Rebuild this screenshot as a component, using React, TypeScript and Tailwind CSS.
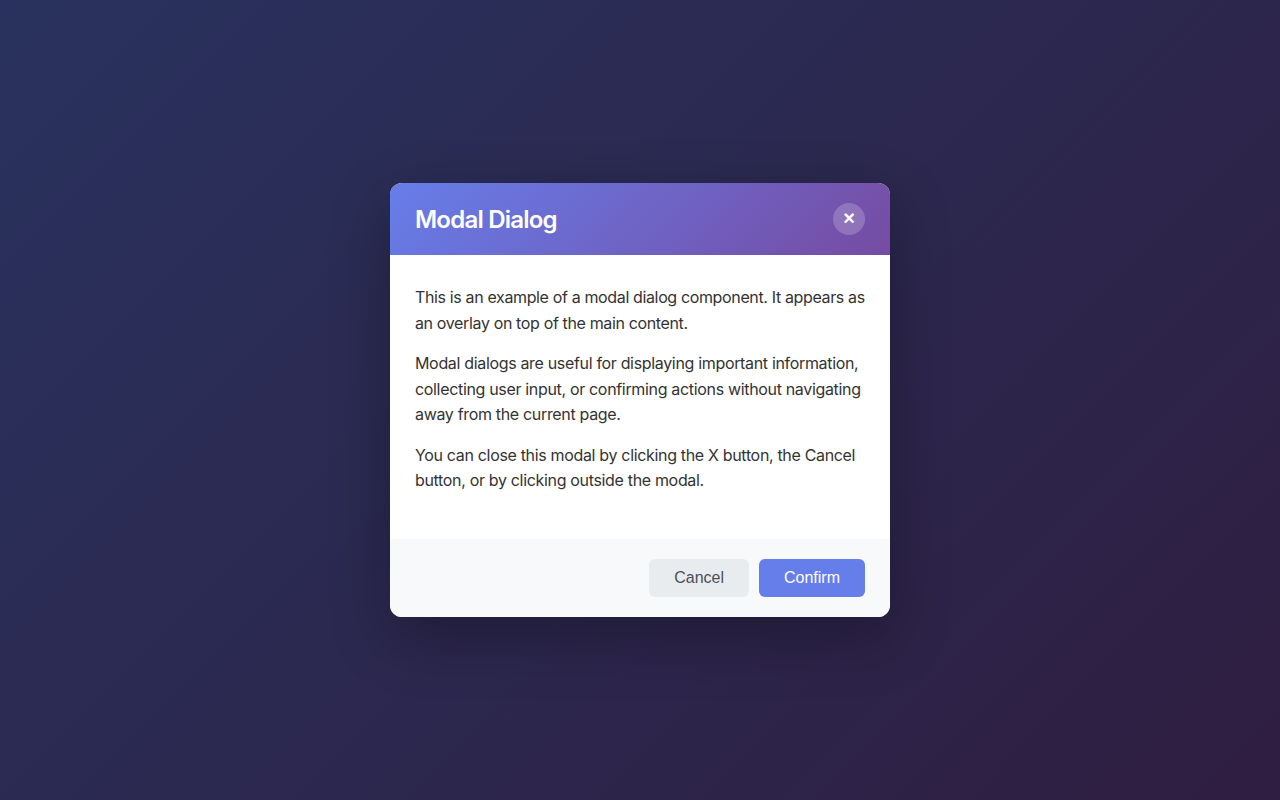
export default function App() {
  return (
    <div className="relative h-screen overflow-hidden bg-[linear-gradient(135deg,#667eea_0%,#764ba2_100%)] font-['Inter',sans-serif]">
      {/* Overlay */}
      <div className="flex h-full items-center justify-center bg-black/60">
        <div className="w-[500px] overflow-hidden rounded-xl bg-white shadow-[0_20px_60px_rgba(0,0,0,0.3)]">
          <div className="flex h-[72px] items-center justify-between bg-[linear-gradient(135deg,#667eea_0%,#764ba2_100%)] px-[25px] text-white">
            <h2 className="pt-0.5 text-2xl leading-8 font-semibold tracking-[-0.78px]">Modal Dialog</h2>
            <button className="flex h-8 w-8 items-center justify-center rounded-full bg-white/20 pb-0.5 font-['Liberation_Sans',sans-serif] text-xl leading-none font-bold text-white">
              ×
            </button>
          </div>
          <div className="px-[25px] py-[30px] text-base leading-[1.6] text-[#333]">
            <p className="mb-[15px] tracking-[-0.36px]">
              This is an example of a modal dialog component. It appears as an overlay on top of the main content.
            </p>
            <p className="mb-[15px] tracking-[-0.33px]">
              Modal dialogs are useful for displaying important information, collecting user input, or confirming actions without navigating away from the current page.
            </p>
            <p className="mb-[15px] tracking-[-0.33px]">
              You can close this modal by clicking the X button, the Cancel button, or by clicking outside the modal.
            </p>
          </div>
          <div className="flex justify-end gap-2.5 bg-[#f8f9fa] px-[25px] py-5 font-['Liberation_Sans',sans-serif]">
            <button className="h-[38px] rounded-md bg-[#e9ecef] px-[25px] text-base text-[#495057]">
              Cancel
            </button>
            <button className="h-[38px] rounded-md bg-[#667eea] px-[25px] text-base text-white">
              Confirm
            </button>
          </div>
        </div>
      </div>
    </div>
  );
}
